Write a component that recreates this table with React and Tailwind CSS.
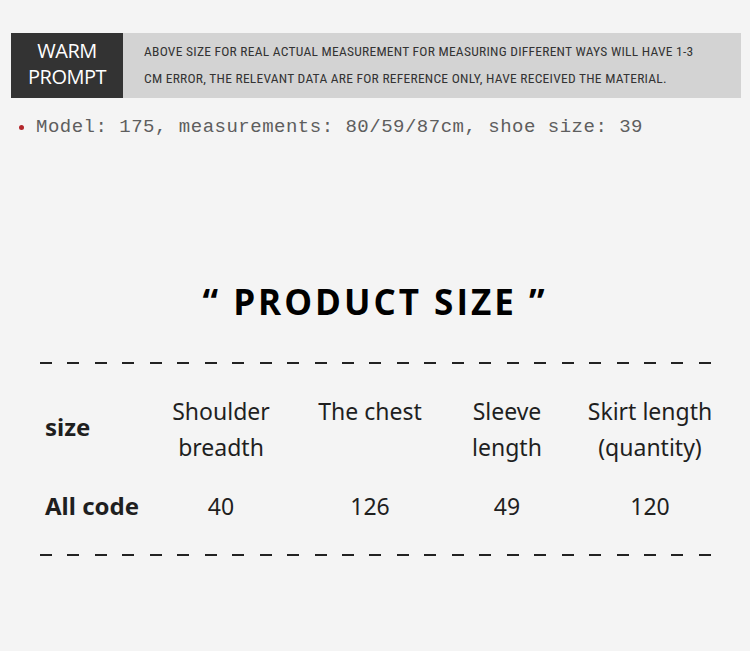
import React from "react";

const dashes = Array.from({ length: 25 });

function DashLine() {
  return (
    <div className="flex justify-between px-[40px] pr-[39px]">
      {dashes.map((_, i) => (
        <span key={i} className="block w-[12px] h-[2px] bg-[#222]"></span>
      ))}
    </div>
  );
}

const headers = [
  ["Shoulder", "breadth"],
  ["The chest"],
  ["Sleeve", "length"],
  ["Skirt length", "(quantity)"],
];
const values = ["40", "126", "49", "120"];

function App() {
  return (
    <div className="w-[750px] h-[651px] bg-[#f4f4f4] overflow-hidden font-['Noto_Sans',sans-serif]">
      <div className="pt-[33px] px-[11px] pr-[9px]">
        <div className="flex h-[65px]">
          <div className="w-[112px] bg-[#333333] flex flex-col items-center justify-center pb-[4px] text-white text-[20px] leading-[26px] font-['Open_Sans',sans-serif]">
            <span className="tracking-[-0.5px]">WARM</span>
            <span className="tracking-[-0.5px]">PROMPT</span>
          </div>
          <div className="flex-1 bg-[#d3d3d3] pl-[21px] pt-[5px] text-[#333] text-[13.5px] leading-[27px] font-['Liberation_Sans_Narrow','Roboto_Condensed',sans-serif]">
            <p className="tracking-[0.25px]">ABOVE SIZE FOR REAL ACTUAL MEASUREMENT FOR MEASURING DIFFERENT WAYS WILL HAVE 1-3</p>
            <p className="tracking-[0.25px]">CM ERROR, THE RELEVANT DATA ARE FOR REFERENCE ONLY, HAVE RECEIVED THE MATERIAL.</p>
          </div>
        </div>
      </div>

      <div className="flex items-center pl-[19px] mt-[16px] h-[26px]">
        <span className="w-[5px] h-[5px] rounded-full bg-[#b3262b] mr-[12px]"></span>
        <span className="text-[19px] text-[#5e5e5e] tracking-[0.5px] font-['Liberation_Mono',monospace]">
          Model: 175, measurements: 80/59/87cm, shoe size: 39
        </span>
      </div>

      <h2 className="mt-[140px] text-center text-[35px] leading-[44px] font-bold tracking-[3px] text-black font-['Open_Sans',sans-serif]">
        “ PRODUCT SIZE ”
      </h2>

      <div className="mt-[38px]">
        <DashLine />
      </div>

      <div className="pl-[45px] mt-[29px] grid grid-cols-[110px_132px_166px_108px_178px] text-[#1f1f1f] text-[23px] leading-[36px]">
        <div className="flex items-center font-bold text-[24px] pb-[4px]">size</div>
        {headers.map((h, i) => (
          <div key={i} className="text-center">
            {h.map((line) => (
              <div key={line}>{line}</div>
            ))}
          </div>
        ))}
        <div className="font-bold text-[24px] mt-[23px]">All code</div>
        {values.map((v) => (
          <div key={v} className="text-center mt-[23px]">{v}</div>
        ))}
      </div>

      <div className="mt-[30px]">
        <DashLine />
      </div>
    </div>
  );
}

export default App;
